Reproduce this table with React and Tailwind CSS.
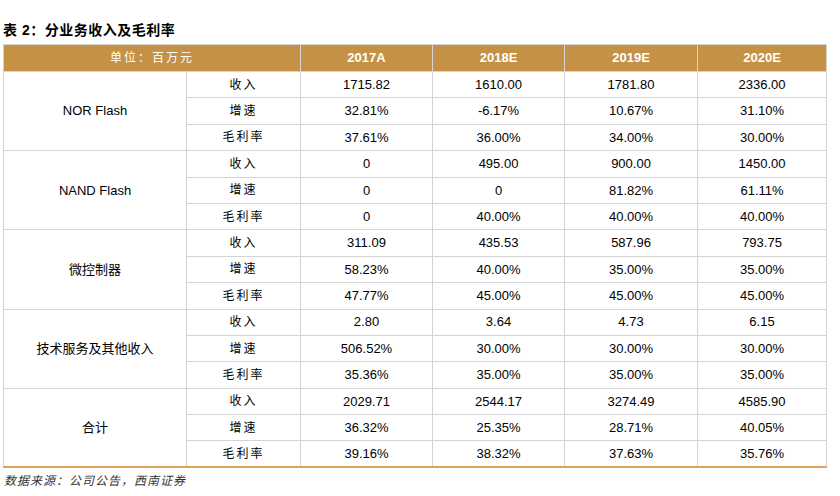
const years = ["2017A", "2018E", "2019E", "2020E"];

const segments = [
  {
    name: "NOR Flash",
    rows: [
      ["收入", "1715.82", "1610.00", "1781.80", "2336.00"],
      ["增速", "32.81%", "-6.17%", "10.67%", "31.10%"],
      ["毛利率", "37.61%", "36.00%", "34.00%", "30.00%"],
    ],
  },
  {
    name: "NAND Flash",
    rows: [
      ["收入", "0", "495.00", "900.00", "1450.00"],
      ["增速", "0", "0", "81.82%", "61.11%"],
      ["毛利率", "0", "40.00%", "40.00%", "40.00%"],
    ],
  },
  {
    name: "微控制器",
    rows: [
      ["收入", "311.09", "435.53", "587.96", "793.75"],
      ["增速", "58.23%", "40.00%", "35.00%", "35.00%"],
      ["毛利率", "47.77%", "45.00%", "45.00%", "45.00%"],
    ],
  },
  {
    name: "技术服务及其他收入",
    rows: [
      ["收入", "2.80", "3.64", "4.73", "6.15"],
      ["增速", "506.52%", "30.00%", "30.00%", "30.00%"],
      ["毛利率", "35.36%", "35.00%", "35.00%", "35.00%"],
    ],
  },
  {
    name: "合计",
    rows: [
      ["收入", "2029.71", "2544.17", "3274.49", "4585.90"],
      ["增速", "36.32%", "25.35%", "28.71%", "40.05%"],
      ["毛利率", "39.16%", "38.32%", "37.63%", "35.76%"],
    ],
  },
];

const cjk = "font-['Liberation_Sans','Noto_Sans_CJK_SC',sans-serif]";

export default function App() {
  return (
    <div className={`w-[840px] h-[496px] bg-white text-black ${cjk}`}>
      <div className="h-[44px] flex items-end pl-[3px] pb-[4px]">
        <h1 className="text-[14px] font-bold leading-[20px] tracking-[0.5px]">表 2：分业务收入及毛利率</h1>
      </div>
      <table className="ml-[3px] w-[823px] table-fixed border-collapse text-[13px]">
        <colgroup>
          <col className="w-[183px]" />
          <col className="w-[114px]" />
          <col className="w-[132px]" />
          <col className="w-[132px]" />
          <col className="w-[133px]" />
          <col className="w-[129px]" />
        </colgroup>
        <thead>
          <tr className="h-[27px] bg-[#c59145] text-white">
            <th colSpan={2} className="border border-[#d4d4d4] font-normal text-[12px] tracking-[2px]">
              单位：百万元
            </th>
            {years.map((y) => (
              <th key={y} className="border border-[#d4d4d4] font-bold">
                {y}
              </th>
            ))}
          </tr>
        </thead>
        <tbody>
          {segments.map((seg, si) =>
            seg.rows.map((row, ri) => {
              const last = si === segments.length - 1 && ri === 2;
              const bb = last ? "border-b-2 border-b-[#e0a25a]" : "";
              return (
                <tr key={seg.name + ri} className="h-[26.4px]">
                  {ri === 0 && (
                    <td
                      rowSpan={3}
                      className={`border border-[#d4d4d4] text-center ${
                        si === segments.length - 1 ? "border-b-2 border-b-[#e0a25a]" : ""
                      }`}
                    >
                      {seg.name}
                    </td>
                  )}
                  {row.map((v, ci) => (
                    <td
                      key={ci}
                      className={`border border-[#d4d4d4] text-center ${ci === 0 ? "text-[12px] tracking-[2px]" : ""} ${bb}`}
                    >
                      {v}
                    </td>
                  ))}
                </tr>
              );
            })
          )}
        </tbody>
      </table>
      <p className="pl-[4px] pt-[4px] text-[12px] italic text-[#333] tracking-[1px]">数据来源：公司公告，西南证券</p>
    </div>
  );
}
